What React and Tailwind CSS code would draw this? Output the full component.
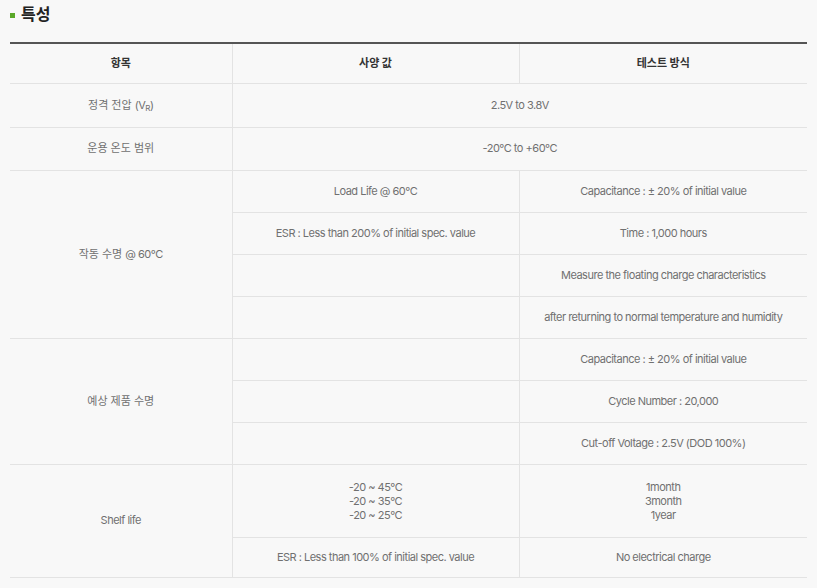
import React from "react";

const border = "border border-[#e3e3e3] text-center align-middle text-[11px]";
const td = `${border} tracking-[-0.5px] text-[#707070] font-normal`;
const th = `${border} text-[#333] font-bold`;
const ko = "tracking-normal";

export default function App() {
  return (
    <div className="w-[817px] h-[588px] bg-[#f8f8f8] overflow-hidden" style={{ fontFamily: 'Inter, "Noto Sans CJK KR", sans-serif' }}>
      <div className="flex items-center gap-[6px] pl-[10px] pt-[3px] h-[25px]">
        <span className="w-[5px] h-[5px] bg-[#5aa829] mt-[2px]"></span>
        <span className="text-[16px] font-bold text-[#222]">특성</span>
      </div>
      <div className="px-[10px] pt-[17px]">
        <table className="w-[797px] border-collapse table-fixed border-t-2 border-t-[#555]">
          <colgroup>
            <col className="w-[222px]" />
            <col className="w-[287px]" />
            <col className="w-[288px]" />
          </colgroup>
          <tbody>
            <tr className="h-[40px]">
              <th className={`${th} border-l-0 border-t-0`}>항목</th>
              <th className={`${th} border-t-0`}>사양 값</th>
              <th className={`${th} border-r-0 border-t-0`}>테스트 방식</th>
            </tr>
            <tr className="h-[44px]">
              <td className={`${td} border-l-0`}><span className={ko}>정격 전압 </span>(V<sub className="text-[8px]">R</sub>)</td>
              <td className={`${td} border-r-0`} colSpan={2}>2.5V to 3.8V</td>
            </tr>
            <tr className="h-[43px]">
              <td className={`${td} border-l-0`}><span className={ko}>운용 온도 범위</span></td>
              <td className={`${td} border-r-0`} colSpan={2}>-20°C to +60°C</td>
            </tr>
            <tr className="h-[42px]">
              <td className={`${td} border-l-0`} rowSpan={4}><span className={ko}>작동 수명 </span>@ 60°C</td>
              <td className={td}>Load Life @ 60°C</td>
              <td className={`${td} border-r-0`}>Capacitance : ± 20% of initial value</td>
            </tr>
            <tr className="h-[42px]">
              <td className={td}>ESR : Less than 200% of initial spec. value</td>
              <td className={`${td} border-r-0`}>Time : 1,000 hours</td>
            </tr>
            <tr className="h-[42px]">
              <td className={td}></td>
              <td className={`${td} border-r-0`}>Measure the floating charge characteristics</td>
            </tr>
            <tr className="h-[42px]">
              <td className={td}></td>
              <td className={`${td} border-r-0`}>after returning to normal temperature and humidity</td>
            </tr>
            <tr className="h-[42px]">
              <td className={`${td} border-l-0`} rowSpan={3}><span className={ko}>예상 제품 수명</span></td>
              <td className={td}></td>
              <td className={`${td} border-r-0`}>Capacitance : ± 20% of initial value</td>
            </tr>
            <tr className="h-[42px]">
              <td className={td}></td>
              <td className={`${td} border-r-0`}>Cycle Number : 20,000</td>
            </tr>
            <tr className="h-[42px]">
              <td className={td}></td>
              <td className={`${td} border-r-0`}>Cut-off Voltage : 2.5V (DOD 100%)</td>
            </tr>
            <tr className="h-[73px]">
              <td className={`${td} border-l-0`} rowSpan={2}>Shelf life</td>
              <td className={`${td} leading-[14px]`}>-20 ~ 45°C<br />-20 ~ 35°C<br />-20 ~ 25°C</td>
              <td className={`${td} border-r-0 leading-[14px]`}>1month<br />3month<br />1year</td>
            </tr>
            <tr className="h-[40px]">
              <td className={td}>ESR : Less than 100% of initial spec. value</td>
              <td className={`${td} border-r-0`}>No electrical charge</td>
            </tr>
          </tbody>
        </table>
      </div>
    </div>
  );
}
